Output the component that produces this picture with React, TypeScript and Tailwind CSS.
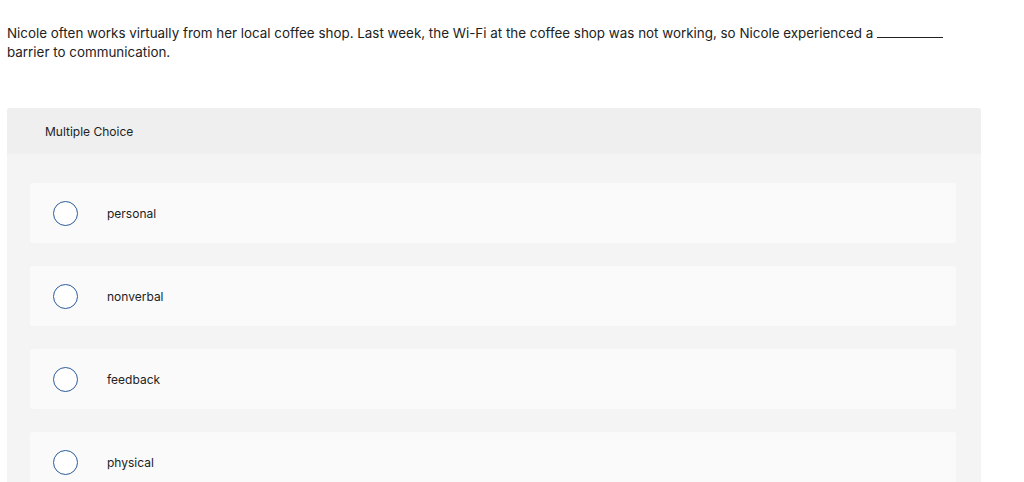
const choices = ['personal', 'nonverbal', 'feedback', 'physical'];

export default function App() {
  return (
    <div className="h-[482px] bg-white text-[#222] overflow-hidden" style={{ fontFamily: 'Inter, "Open Sans", sans-serif' }}>
      <div className="px-[7px] pt-[24px] text-[13.4px] leading-[19px]">
        Nicole often works virtually from her local coffee shop. Last week, the Wi-Fi at the coffee shop was not working, so Nicole experienced a{' '}
        <span className="inline-block w-[66px] border-b border-[#222] align-baseline" />
        <br />
        barrier to communication.
      </div>

      <div className="ml-[7px] mt-[46px] w-[974px] rounded-t-[3px] bg-[#f4f4f4]">
        <div className="flex h-[46px] items-center rounded-t-[3px] bg-[#efefef] pl-[38px] pt-[2px] text-[12px]">
          Multiple Choice
        </div>
        <div className="flex flex-col gap-[23px] pl-[23px] pr-[25px] pt-[29px] pb-[20px]">
          {choices.map(choice => (
            <div key={choice} className="flex h-[60px] items-center rounded-[3px] bg-[#fafafa] pl-[23px]">
              <span className="h-[25px] w-[25px] rounded-full border border-[#2b5c99] bg-white" />
              <span className="ml-[29px] pt-[2px] text-[12px]">{choice}</span>
            </div>
          ))}
        </div>
      </div>
    </div>
  );
}
